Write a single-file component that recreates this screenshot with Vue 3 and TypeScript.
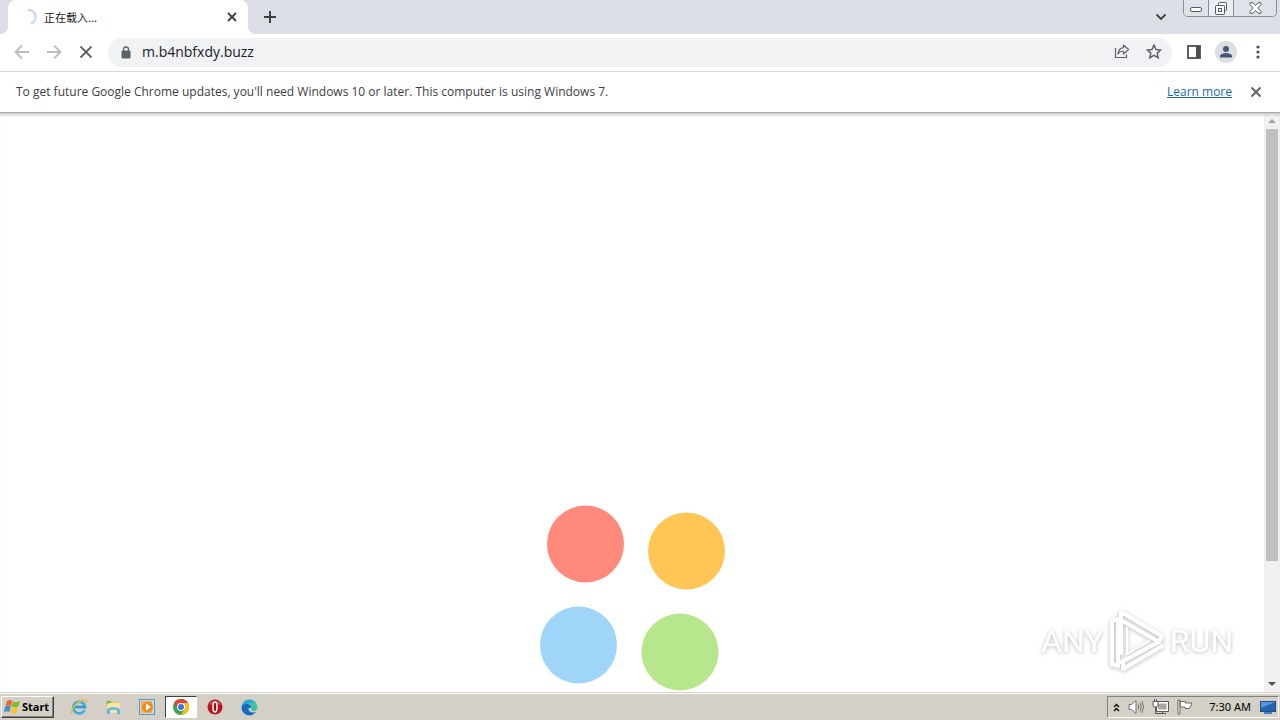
<script setup lang="ts">
import { ref } from 'vue'

interface Dot { x: number; y: number; color: string }

const address = ref('m.b4nbfxdy.buzz')
const dots: Dot[] = [
  { x: 53.5, y: 46, color: '#ff897b' },
  { x: 154.5, y: 53, color: '#ffc555' },
  { x: 46.5, y: 147, color: '#9fd5f8' },
  { x: 148, y: 154, color: '#b8e68c' },
]
</script>

<template>
  <div class="screen">
    <header class="tabs">
      <div class="tab">
        <svg class="spinner" width="16" height="16" viewBox="0 0 16 16"><path d="M6 1A7 7 0 0 1 9 14.500" fill="none" stroke="#c5cef4" stroke-width="2" /></svg>
        <span class="tab-title">正在载入...</span>
        <button class="plain tab-close" aria-label="Close tab">
          <svg width="10" height="10" viewBox="0 0 10 10"><path d="M1 1L9 9M9 1L1 9" stroke="#3c4043" stroke-width="1.800" /></svg>
        </button>
      </div>
      <button class="plain new-tab" aria-label="New tab">
        <svg width="12" height="12" viewBox="0 0 12 12"><path d="M6 0V12M0 6H12" stroke="#3c4043" stroke-width="2" /></svg>
      </button>
      <button class="plain tab-search" aria-label="Search tabs">
        <svg width="12" height="8" viewBox="0 0 12 8"><path d="M1.500 1.500L6 6L10.500 1.500" fill="none" stroke="#3c4043" stroke-width="1.800" /></svg>
      </button>
      <div class="window-buttons">
        <button aria-label="Minimize"><svg width="12" height="5" viewBox="0 0 12 5"><rect x=".5" y=".5" width="11" height="4" rx="1.500" fill="#fff" stroke="#535862" /></svg></button>
        <button class="light" aria-label="Restore"><svg width="14" height="14" viewBox="0 0 14 14" fill="#f7f8fa" stroke="#535862"><rect x="4.500" y=".5" width="8" height="8" rx="1" /><rect x="1.500" y="3.500" width="9" height="9" rx="1" /><rect x="4.500" y="6.500" width="3" height="3" /></svg></button>
        <button class="wide" aria-label="Close"><svg width="13" height="12" viewBox="0 0 13 12"><path d="M1 .8H4L6.500 3.500L9 .8H12V2.500L8.800 6L12 9.500V11.200H9L6.500 8.500L4 11.200H1V9.500L4.200 6L1 2.500Z" fill="#fff" stroke="#535862" /></svg></button>
      </div>
    </header>

    <nav class="toolbar">
      <button class="plain nav" aria-label="Back"><svg width="16" height="16" viewBox="0 0 16 16"><path d="M15 8H2M8 1.500L1.500 8L8 14.500" fill="none" stroke="#babcbe" stroke-width="1.800" /></svg></button>
      <button class="plain nav" aria-label="Forward"><svg width="16" height="16" viewBox="0 0 16 16"><path d="M1 8H14M8 1.500L14.500 8L8 14.500" fill="none" stroke="#babcbe" stroke-width="1.800" /></svg></button>
      <button class="plain nav" aria-label="Stop"><svg width="14" height="14" viewBox="0 0 14 14"><path d="M1.500 1.500L12.500 12.500M12.500 1.500L1.500 12.500" stroke="#5f6368" stroke-width="1.800" /></svg></button>
      <div class="omnibox">
        <svg class="lock" width="10" height="13" viewBox="0 0 10 13"><rect y="4.500" x=".5" width="9" height="8" rx="1" fill="#5f6368" /><path d="M2.500 5V3.500A2.500 2.500 0 0 1 7.500 3.500V5" fill="none" stroke="#5f6368" stroke-width="1.300" /></svg>
        <input v-model="address" type="text" aria-label="Address" />
        <button class="plain" aria-label="Share"><svg width="16" height="16" viewBox="0 0 16 16" fill="none" stroke="#5f6368" stroke-width="1.200"><path d="M1.500 4V13.500H12.500V10.500" /><path d="M9.500 1L14.500 5.500L9.500 10V7.300Q5.800 7 4 10Q4.500 4.300 9.500 3.700Z" stroke-linejoin="round" /></svg></button>
        <button class="plain" aria-label="Bookmark"><svg width="16" height="16" viewBox="0 0 16 16"><path d="M8 1L10 5.500L14.700 6L11.200 9.100L12.200 13.700L8 11.300L3.800 13.700L4.800 9.100L1.300 6L6 5.500Z" fill="none" stroke="#5f6368" stroke-width="1.500" /></svg></button>
      </div>
      <button class="plain panel" aria-label="Side panel"><svg width="14" height="14" viewBox="0 0 14 14"><rect x="1" y="1" width="12" height="12" fill="none" stroke="#4c5054" stroke-width="1.800" /><path d="M9 1H13V13H9Z" fill="#4c5054" /></svg></button>
      <button class="plain" aria-label="Profile"><svg width="22" height="22" viewBox="0 0 22 22"><circle cx="11" cy="11" r="11" fill="#dcdfe3" /><circle cx="11" cy="8" r="3" fill="#48567a" /><path d="M5 16.500V15C5 13 9 12 11 12S17 13 17 15V16.500Z" fill="#48567a" /></svg></button>
      <button class="plain more" aria-label="Menu"><svg width="4" height="14" viewBox="0 0 4 14" fill="#4c5054"><circle cx="2" cy="2" r="1.600" /><circle cx="2" cy="7" r="1.600" /><circle cx="2" cy="12" r="1.600" /></svg></button>
    </nav>

    <section class="infobar">
      <span>To get future Google Chrome updates, you'll need Windows 10 or later. This computer is using Windows 7.</span>
      <a href="#">Learn more</a>
      <button class="plain" aria-label="Dismiss"><svg width="12" height="12" viewBox="0 0 12 12"><path d="M1.500 1.500L10.500 10.500M10.500 1.500L1.500 10.500" stroke="#5f6368" stroke-width="2" /></svg></button>
    </section>

    <div class="viewport">
      <main class="page">
        <svg class="loader" width="200" height="200" viewBox="0 0 200 200">
          <circle v-for="dot in dots" :key="dot.color" :cx="dot.x" :cy="dot.y" r="38.500" :fill="dot.color" />
        </svg>
      </main>
      <div class="scrollbar">
        <button class="plain" aria-label="Scroll up"><svg width="8" height="4" viewBox="0 0 8 4"><path d="M0 4L4 0L8 4Z" fill="#a3a3a3" /></svg></button>
        <div class="track"><div class="thumb"></div></div>
        <button class="plain" aria-label="Scroll down"><svg width="8" height="4" viewBox="0 0 8 4"><path d="M0 0L4 4L8 0Z" fill="#505050" /></svg></button>
      </div>
      <div class="watermark">
        <span>ANY</span>
        <svg width="58" height="66" viewBox="0 0 58 66" fill="none" stroke="#fff" stroke-width="4" stroke-linejoin="round" stroke-linecap="round">
          <path d="M10 11L4 13V56L10 58V14" />
          <path d="M13 45V4L54 28L51 34L13 12" />
          <path d="M19 20V46L41 33" stroke-width="2" />
          <path d="M13 54L51 34M54 38L15 61V54" />
        </svg>
        <span>RUN</span>
      </div>
    </div>

    <footer class="taskbar">
      <button class="start">
        <svg width="17" height="16" viewBox="0 0 17 16"><path d="M3 2Q6 0 8.500 2L7 7Q4.500 5.500 1.500 7Z" fill="#ee6428" /><path d="M9 2.500Q12 4 16 2L14.300 7.500Q11 9 7.500 7.500Z" fill="#7dba3b" /><path d="M1.300 7.500Q4 6 6.800 7.500L5.300 13Q3 11.500 0 13Z" fill="#3c8bd3" /><path d="M7.500 8Q11 9.500 14 8L12.500 13.700Q9.500 15.500 6 13.500Z" fill="#f6c52e" /></svg>
        Start
      </button>
      <div class="apps">
        <button class="plain" aria-label="Internet Explorer"><svg width="18" height="18" viewBox="0 0 18 18" fill="none"><path d="M14.500 12A5.800 5.800 0 1 1 15 9H4" stroke="#3faee3" stroke-width="2.800" /><path d="M3.500 9H15" stroke="#2484c4" stroke-width="1" /><path d="M2 16C-1 14 6 4 13 2C17 1 17 3 15.500 5" stroke="#e7b936" stroke-width="1.400" /></svg></button>
        <button class="plain" aria-label="Explorer"><svg width="18" height="18" viewBox="0 0 18 18"><path d="M2 2H7L8 4H14V14H2Z" fill="#e6c66a" /><path d="M3 3H7V7H3Z" fill="#5fbd77" /><path d="M5 5H16V15H3V7Z" fill="#f7e6a4" /><path d="M3 16V11Q9 7 16 11V16H13V12H6V16Z" fill="#62b9e8" /></svg></button>
        <button class="plain" aria-label="Media Player"><svg width="18" height="18" viewBox="0 0 18 18"><rect x="1.500" y="1.500" width="15" height="15" fill="#b8dcf2" stroke="#5799c7" /><rect x="3" y="3" width="11" height="12" fill="#f7b455" /><circle cx="9.500" cy="9" r="5.500" fill="#f28a1c" /><path d="M8 5.500V12.500L13 9Z" fill="#fff" /></svg></button>
        <button class="plain pressed" aria-label="Google Chrome"><svg width="16" height="16" viewBox="0 0 16 16"><circle cx="8" cy="8" r="8" fill="#34a457" /><path d="M1.070 4A8 8 0 0 1 14.930 4H8L4.500 10Z" fill="#e24133" /><path d="M14.930 4A8 8 0 0 1 8 16L11.500 10L8 4Z" fill="#fbc116" /><circle cx="8" cy="8" r="4" fill="#fff" /><circle cx="8" cy="8" r="3" fill="#3777e3" /></svg></button>
        <button class="plain" aria-label="Opera"><svg width="16" height="16" viewBox="0 0 16 16"><circle cx="8" cy="8" r="7.500" fill="#b5161d" /><path d="M2 6A6.500 6.500 0 0 1 14 6Q8 3 2 6Z" fill="#e0585c" /><ellipse cx="8" cy="8" rx="2" ry="5" fill="#9b0d13" stroke="#fff" stroke-width="1.500" /></svg></button>
        <button class="plain" aria-label="Edge"><svg width="17" height="17" viewBox="0 0 17 17"><path d="M.5 9A8 8 0 0 1 16.500 8Q16.500 12 12.500 12Q10 12 10 10Q11 5 6.500 5Q2.500 5 .5 9Z" fill="#3cc4a8" /><path d="M.5 8A8 8 0 0 1 10 .7Q13 1.500 14 4Q8 2 .5 8Z" fill="#2fa6d8" /><path d="M.5 8.500Q3 4 7 5Q10.500 6 10 9Q8 8 7.500 10Q8 14.500 15 13Q11 17.500 6 16Q.5 14 .5 8.500Z" fill="#1769c2" /></svg></button>
      </div>
      <div class="tray">
        <button class="plain chevrons" aria-label="Show hidden icons"><svg width="7" height="9" viewBox="0 0 7 9"><path d="M1 4L3.500 1.500L6 4M1 8L3.500 5.500L6 8" fill="none" stroke="#111" stroke-width="1.500" /></svg></button>
        <button class="plain" aria-label="Volume"><svg width="16" height="16" viewBox="0 0 16 16" stroke="#73706c"><path d="M1 5.500H3.500L8 1.500V14.500L3.500 10.500H1Z" fill="#fff" /><path d="M10 5.500Q11.500 8 10 10.500M12 3.500Q14.500 8 12 12.500M14 2Q17 8 14 14" fill="none" /></svg></button>
        <button class="plain" aria-label="Network"><svg width="17" height="16" viewBox="0 0 17 16" stroke="#5c5a57"><path d="M5 3.500H15.500V11.500H5Z" fill="#aaa7a2" stroke="#fff" stroke-width="2" /><path d="M6 2.500H16.500V12.500H4.500V8M6.500 14.500H14M10.500 12V14" fill="none" /><path d="M1 2.500H6V6Q6 8 3.500 8Q1 8 1 6ZM2.500 0V2.500M4.500 0V2.500" fill="#fff" /><path d="M3.500 8V14.500H8" fill="none" /></svg></button>
        <button class="plain" aria-label="Action center"><svg width="16" height="16" viewBox="0 0 16 16"><path d="M1 1H3V15H1ZM3 2.500H8.500V4H15L12.500 9.500H8V8H3Z" fill="#fff" stroke="#6c6965" /></svg></button>
        <time>7:30 AM</time>
        <button class="plain" aria-label="Show desktop"><svg width="16" height="14" viewBox="0 0 16 14"><rect x=".5" y="1.500" width="15" height="10" fill="#2363b2" stroke="#234f86" /><path d="M1 2H15L1 8Z" fill="#5b96d6" /><path d="M4 14H12V12H4Z" fill="#4b7db5" /></svg></button>
      </div>
    </footer>
  </div>
</template>

<style>
body { margin: 0; }
</style>

<style scoped>
* { box-sizing: border-box; }
.screen { display: flex; flex-direction: column; height: 100vh; overflow: hidden; background: #fff; font-family: "Noto Sans", "Noto Sans CJK SC", sans-serif; color: #3c4043; }
button { font: inherit; padding: 0; }
svg { display: block; flex: none; }
.plain { display: flex; align-items: center; justify-content: center; border: 0; background: none; }
.tabs { display: flex; flex: none; height: 34px; padding-left: 8px; background: #dce0e6; }
.tab { position: relative; display: flex; align-items: center; width: 240px; padding: 0 11px 0 14px; background: #fff; border-radius: 8px 8px 0 0; }
.tab::before, .tab::after { content: ""; position: absolute; bottom: 0; width: 8px; height: 8px; }
.tab::before { right: 100%; background: radial-gradient(circle at 0 0, transparent 8px, #fff 8px); }
.tab::after { left: 100%; background: radial-gradient(circle at 100% 0, transparent 8px, #fff 8px); }
.tab-title { flex: 1; margin-left: 6px; font-family: "Noto Sans CJK SC", sans-serif; font-size: 11px; line-height: 16px; color: #202124; }
.new-tab { width: 28px; margin-left: 8px; }
.tab-search { width: 28px; margin-left: auto; }
.window-buttons { display: flex; height: 17px; margin: 0 3px 0 8px; border: 1px solid #888d96; border-top: 0; border-radius: 0 0 5px 5px; overflow: hidden; }
.window-buttons button { display: flex; align-items: center; justify-content: center; width: 25px; padding-top: 2px; border: 0; border-right: 1px solid #888d96; background: #dfe2e8; }
.window-buttons .light { background: #e9edf4; }
.window-buttons .wide { width: 42px; padding-top: 0; border-right: 0; }
.toolbar { display: flex; flex: none; align-items: center; height: 38px; padding: 0 11px 1px 6px; border-bottom: 1px solid #d5d7d9; }
.nav { width: 32px; height: 32px; }
.omnibox { display: flex; flex: 1; align-items: center; gap: 16px; height: 29px; margin: 0 15px 0 6px; padding: 0 10px 0 13px; border-radius: 15px; background: #f0f2f4; }
.omnibox input { flex: 1; min-width: 0; margin-left: -5px; padding: 0; border: 0; outline: 0; background: none; font: 14px/20px "Open Sans", sans-serif; color: #202124; }
.panel { margin-right: 14px; }
.more { width: 22px; margin-left: 10px; }
.infobar { display: flex; flex: none; align-items: center; height: 41px; padding: 0 18px 0 16px; border-bottom: 1px solid #a9aaaa; font: 12px/18px "Open Sans", sans-serif; }
.infobar span { flex: 1; }
.infobar a { margin-right: 18px; color: #1967c2; }
.viewport { position: relative; display: flex; flex: 1; min-height: 0; box-shadow: inset 0 4px 3px -2px #cccccc; }
.page { flex: 1; overflow: hidden; }
.loader { margin: 385px auto 0; }
.scrollbar { display: flex; flex-direction: column; width: 16px; background: #f1f1f1; box-shadow: inset 0 4px 3px -2px #cccccc; }
.scrollbar button { height: 16px; }
.track { flex: 1; }
.thumb { width: 12px; height: 79%; margin: 0 auto; background: #c1c1c1; }
.watermark { position: absolute; right: 47px; bottom: 18px; display: flex; align-items: center; gap: 4px; color: #fff; font: 32px/66px Roboto, sans-serif; filter: drop-shadow(0 1px 2px #bbbbbb); }
.taskbar { display: flex; flex: none; align-items: center; height: 28px; padding: 2px 1px 1px; border-top: 1px solid #d4d0c8; background: #d4d0c8; box-shadow: inset 0 1px #fff; }
.start { display: flex; align-items: center; gap: 1px; width: 53px; height: 22px; padding: 0 2px; border: 1px solid; border-color: #fff #404040 #404040 #fff; box-shadow: inset -1px -1px #808080; background: #d4d0c8; font: bold 11px/16px "Noto Sans", sans-serif; color: #000; }
.apps { display: flex; gap: 2px; margin-left: 9px; }
.apps button { width: 32px; height: 22px; }
.apps .pressed { border: 1px solid; border-color: #404040 #fff #fff #404040; background: #fff; }
.tray { display: flex; align-items: center; gap: 8px; height: 22px; margin-left: auto; padding: 0 2px 0 5px; border: 1px solid; border-color: #808080 #fff #fff #808080; }
.tray time { margin: 0 1px 0 8px; font: 11px/16px "Noto Sans", sans-serif; color: #000; }
</style>
